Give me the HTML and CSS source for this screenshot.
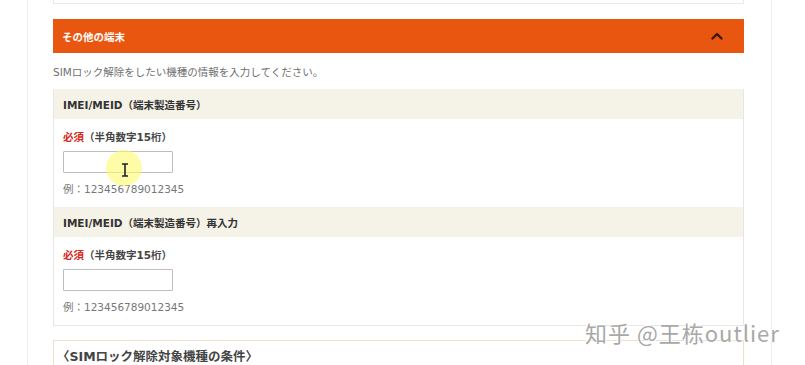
FILE: index.html
```html
<!DOCTYPE html>
<html lang="ja">
<head>
<meta charset="utf-8">
<link rel="stylesheet" href="styles.css">
</head>
<body>
<div class="page">
  <div class="content">
    <div class="top-box"></div>
    <div class="acc-head">
      <span class="acc-title">その他の端末</span>
      <svg class="chev" width="12" height="8" viewBox="0 0 12 8"><path d="M1.5 6.5 L6 2 L10.5 6.5" fill="none" stroke="#3b1606" stroke-width="2.4" stroke-linecap="round" stroke-linejoin="round"/></svg>
    </div>
    <p class="desc">SIMロック解除をしたい機種の情報を入力してください。</p>
    <div class="form-box">
      <div class="f-head">IMEI/MEID（端末製造番号）</div>
      <div class="f-body">
        <div class="label"><span class="req">必須</span>（半角数字15桁）</div>
        <div class="input-wrap">
          <input class="field" type="text">
          <span class="spot"></span>
          <svg class="ibeam" width="8" height="14" viewBox="0 0 8 14"><path d="M1 1 H7 M4 1 V13 M1 13 H7" fill="none" stroke="#222" stroke-width="1.6"/></svg>
        </div>
        <div class="ex">例：123456789012345</div>
      </div>
      <div class="f-head">IMEI/MEID（端末製造番号）再入力</div>
      <div class="f-body">
        <div class="label"><span class="req">必須</span>（半角数字15桁）</div>
        <div class="input-wrap"><input class="field" type="text"></div>
        <div class="ex">例：123456789012345</div>
      </div>
    </div>
    <div class="cond-box">
      <div class="cond-title">〈SIMロック解除対象機種の条件〉</div>
    </div>
  </div>
</div>
<div class="watermark">知乎 @王栋outlier</div>
</body>
</html>
```
FILE: styles.css
```css
html, body {
  margin: 0;
  padding: 0;
  background: #ffffff;
  font-family: "DejaVu Sans", "Noto Sans CJK JP", sans-serif;
  overflow: hidden;
  height: 365px;
}
.page {
  margin-left: 27px;
  width: 743px;
  height: 365px;
  border-left: 1px solid #eeeeee;
  border-right: 1px solid #eeeeee;
}
.content {
  margin-left: 25px;
  width: 691px;
}
.top-box {
  border: 1px solid #e8e8e8;
  border-top: none;
  box-sizing: border-box;
  height: 4px;
}
.acc-head {
  margin-top: 15px;
  height: 34px;
  background: #e9560f;
  display: flex;
  align-items: center;
  justify-content: space-between;
  padding: 0 21px 0 9px;
}
.acc-title {
  color: #ffffff;
  font-size: 10.5px;
  font-weight: 700;
}
.chev { display: block; }
.desc {
  margin: 11px 0 0 0;
  height: 25px;
  line-height: 16px;
  font-size: 10.5px;
  color: #707070;
}
.form-box {
  border: 1px solid #e6e6e6;
  border-top: none;
}
.f-head {
  height: 30px;
  background: #f5f2e7;
  display: flex;
  align-items: center;
  padding-left: 9px;
  font-size: 10.5px;
  font-weight: 700;
  color: #333333;
}
.f-body {
  padding: 10px 9px 10px;
  height: 88px;
  box-sizing: border-box;
}
.label {
  font-size: 10.5px;
  line-height: 16px;
  font-weight: 700;
  color: #444444;
}
.req { color: #d8261b; }
.input-wrap {
  position: relative;
  margin-top: 6px;
  width: 110px;
  height: 22px;
}
.field {
  display: block;
  box-sizing: border-box;
  width: 110px;
  height: 22px;
  margin: 0;
  border: 1px solid #bdbdbd;
  border-radius: 1px;
  background: #fff;
  padding: 0;
}
.spot {
  position: absolute;
  left: 43px;
  top: -1px;
  width: 36px;
  height: 36px;
  border-radius: 50%;
  background: rgba(255, 250, 110, 0.6);
}
.ibeam {
  position: absolute;
  left: 58px;
  top: 12px;
}
.ex {
  margin-top: 8px;
  font-size: 10.5px;
  line-height: 16px;
  color: #777777;
}
.cond-box {
  margin-top: 14px;
  border: 1px solid #efe2cc;
  border-bottom: none;
  height: 25px;
  padding: 8px 0 0 3px;
}
.cond-title {
  font-size: 12.5px;
  font-weight: 700;
  color: #444444;
  line-height: 16px;
}
.watermark {
  position: absolute;
  left: 585px;
  top: 318px;
  font-size: 22px;
  line-height: 28px;
  letter-spacing: 1px;
  color: #a8a8a8;
  font-family: "Noto Sans CJK SC", "Noto Sans", sans-serif;
  text-shadow: 1px 1px 0 #fff, -1px -1px 0 #fff;
  white-space: nowrap;
}
```
